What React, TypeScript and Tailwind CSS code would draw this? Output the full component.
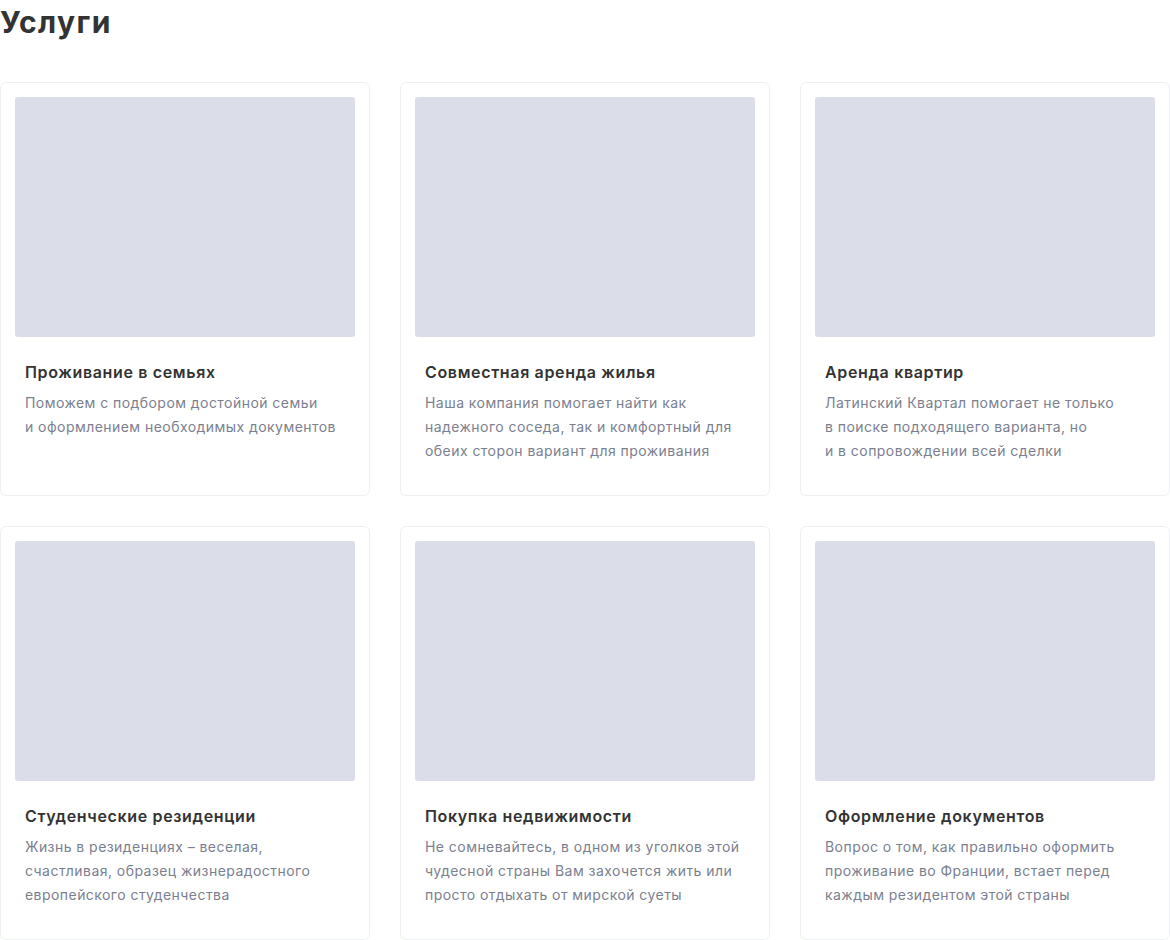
import React from "react";

const cards = [
  { title: "Проживание в семьях", lines: ["Поможем с подбором достойной семьи", "и оформлением необходимых документов"] },
  { title: "Совместная аренда жилья", lines: ["Наша компания помогает найти как", "надежного соседа, так и комфортный для", "обеих сторон вариант для проживания"] },
  { title: "Аренда квартир", lines: ["Латинский Квартал помогает не только", "в поиске подходящего варианта, но", "и в сопровождении всей сделки"] },
  { title: "Студенческие резиденции", lines: ["Жизнь в резиденциях – веселая,", "счастливая, образец жизнерадостного", "европейского студенчества"] },
  { title: "Покупка недвижимости", lines: ["Не сомневайтесь, в одном из уголков этой", "чудесной страны Вам захочется жить или", "просто отдыхать от мирской суеты"] },
  { title: "Оформление документов", lines: ["Вопрос о том, как правильно оформить", "проживание во Франции, встает перед", "каждым резидентом этой страны"] },
];

export default function App() {
  return (
    <div className="w-[1170px] bg-white" style={{ fontFamily: "Inter, 'Noto Sans', sans-serif" }}>
      <h1 className="text-[30px] leading-[44px] font-bold text-[#333333] tracking-[1.4px]">Услуги</h1>
      <div className="mt-[38px] grid grid-cols-3 gap-x-[30px] gap-y-[30px]">
        {cards.map((c) => (
          <div key={c.title} className="h-[414px] rounded-[6px] border border-[#eef0f5] p-[14px]">
            <div className="h-[240px] w-[340px] rounded-[3px] bg-[#dbdee8]" />
            <div className="px-[10px] pt-[23px]">
              <div className="text-[16px] leading-[24px] font-semibold text-[#333333] tracking-[0.65px]">{c.title}</div>
              <div className="mt-[7px] text-[14px] leading-[24px] text-[#7b8090] tracking-[0.45px]">
                {c.lines.map((l) => (
                  <div key={l} className="whitespace-nowrap">{l}</div>
                ))}
              </div>
            </div>
          </div>
        ))}
      </div>
    </div>
  );
}
